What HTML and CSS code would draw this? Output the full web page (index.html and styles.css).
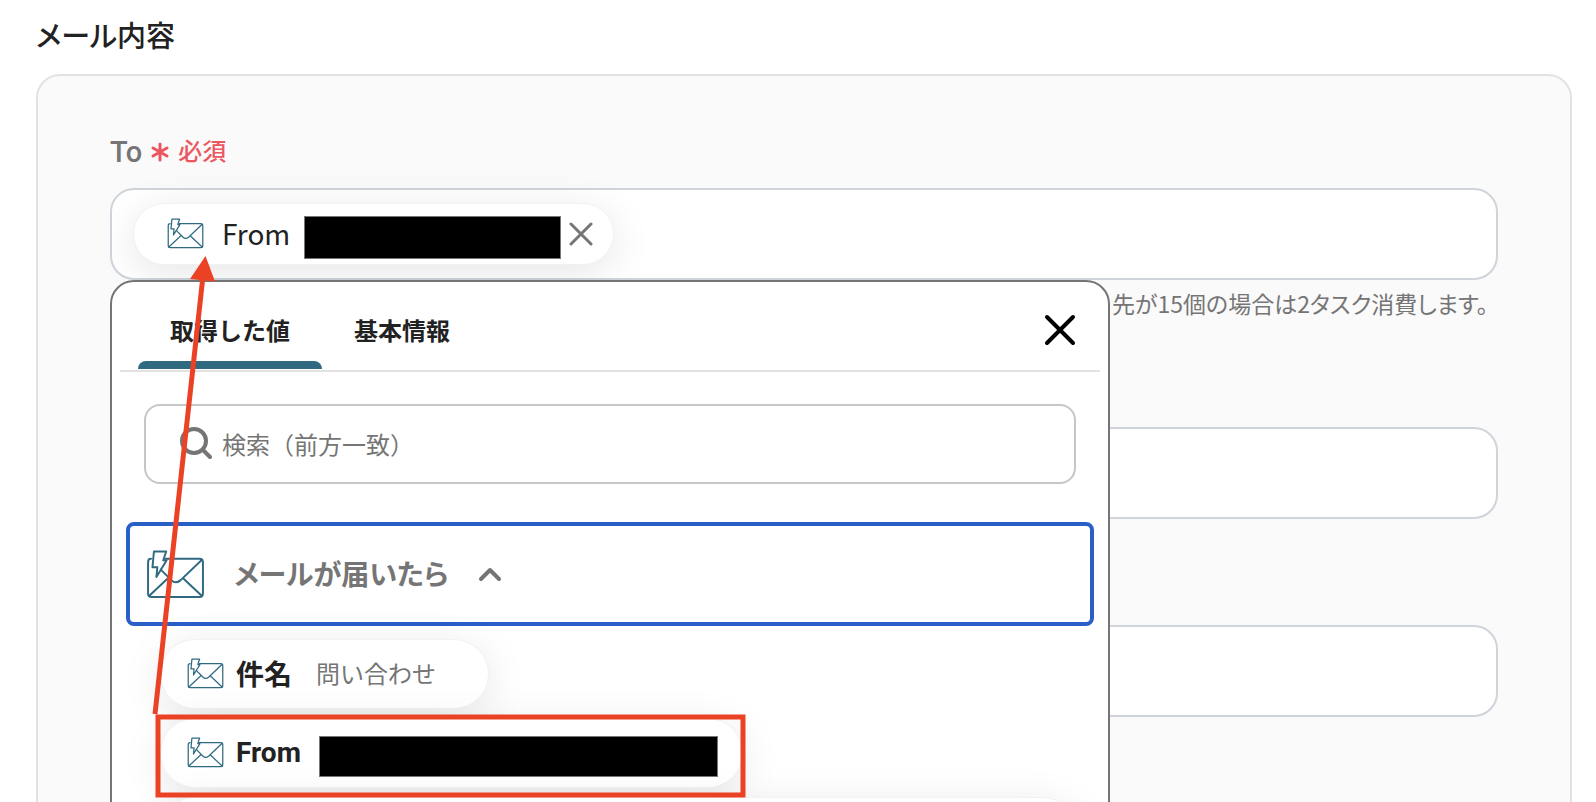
FILE: index.html
```
<!DOCTYPE html>
<html lang="ja">
<head>
<meta charset="utf-8">
<title>メール内容</title>
<link rel="stylesheet" href="styles.css">
</head>
<body>
<svg class="defs" aria-hidden="true">
  <symbol id="mail" viewBox="0 0 60 50">
    <g fill="none" stroke="currentColor" stroke-width="2" stroke-linejoin="round" stroke-linecap="round">
      <path d="M20 9H54.500Q58 9 58 12.500V44.500Q58 48 54.500 48H5.500Q2 48 2 44.500V12.500Q2 9 5 9"/>
      <path d="M15 20L26 31Q30 35 35 31L57 10M3 47L22 29M57 47L38 29"/>
      <path d="M8 1.500H20.500L17.500 10.500H21L10.500 27.500L11.500 17.500H6.500Z"/>
    </g>
  </symbol>
</svg>
<main class="page">
  <h1 class="title">メール内容</h1>
  <section class="panel">
    <div class="group">
      <div class="label">
        <span class="label-name">To</span>
        <svg class="star" viewBox="0 0 18 20"><path d="M9 2V18M2 6L16 14M16 6L2 14"/></svg>
        <span class="required">必須</span>
      </div>
      <div class="field">
        <div class="token">
          <svg class="mail-sm"><use href="#mail"/></svg>
          <span class="token-name">From</span>
          <span class="mask mask-token"></span>
          <button class="icon-button" aria-label="削除"><svg class="remove" viewBox="0 0 24 24"><path d="M2 2L22 22M22 2L2 22"/></svg></button>
        </div>
      </div>
      <p class="help">先が15個の場合は2タスク消費します。</p>

      <div class="picker">
        <div class="tabs">
          <button class="tab tab-active">取得した値</button>
          <button class="tab">基本情報</button>
          <button class="icon-button close-button" aria-label="閉じる"><svg class="close" viewBox="0 0 32 32"><path d="M3 3L29 29M29 3L3 29"/></svg></button>
        </div>
        <div class="picker-body">
          <label class="search">
            <svg class="search-icon" viewBox="0 0 32 34"><circle cx="14" cy="14" r="12"/><path d="M23 23L30 30"/></svg>
            <input class="search-input" type="text" placeholder="検索（前方一致）" aria-label="検索">
          </label>
          <button class="source">
            <svg class="mail-lg"><use href="#mail"/></svg>
            <span>メールが届いたら</span>
            <svg class="chevron" viewBox="0 0 24 16"><path d="M3 13L12 4L21 13"/></svg>
          </button>
          <div class="values">
            <button class="value"><svg class="mail-sm"><use href="#mail"/></svg><span class="value-name">件名</span><span class="value-text">問い合わせ</span></button>
            <button class="value value-from"><svg class="mail-sm"><use href="#mail"/></svg><span class="value-name">From</span><span class="mask mask-value"></span></button>
            <button class="value value-wide" aria-label="値"></button>
          </div>
        </div>
      </div>
    </div>
    <input class="field field-next" type="text" aria-label="Cc">
    <input class="field field-next" type="text" aria-label="Bcc">
  </section>
</main>
<svg class="annotation" width="760" height="802" viewBox="0 0 760 802" aria-hidden="true">
  <rect x="158" y="717" width="585" height="78" fill="none" stroke="#eb4125" stroke-width="5"/>
  <path d="M155 714L203 276" fill="none" stroke="#eb4125" stroke-width="5"/>
  <path d="M205.500 256L215 281.500L190 279Z" fill="#eb4125"/>
</svg>
</body>
</html>
```
FILE: styles.css
```
* { box-sizing: border-box; }

body {
  margin: 0;
  height: 100vh;
  overflow: hidden;
  background: #fff;
  color: #222;
  font-family: "Noto Sans CJK JP", sans-serif;
  font-size: 24px;
}

button, input { font: inherit; color: inherit; }
button { border: 0; background: none; padding: 0; }
svg { flex: none; }

.defs { position: absolute; width: 0; height: 0; }

.page { padding: 13px 24px 0 36px; }

.title {
  margin: 0 0 19px;
  font-size: 29px;
  line-height: 42px;
  font-weight: 500;
  font-feature-settings: "palt";
}

.panel {
  min-height: 100vh;
  padding: 56px 72px;
  border: 2px solid #e2e2e2;
  border-radius: 24px;
  background: #fafafa;
}

.group { position: relative; }

.label {
  display: flex;
  align-items: center;
  gap: 8px;
  height: 40px;
  margin-bottom: 16px;
  font-weight: 500;
}
.label-name { color: #757575; font-family: Roboto, sans-serif; font-size: 29px; line-height: 40px; }
.required { margin-bottom: 5px; color: #eb5760; font-size: 24px; line-height: 35px; }
.star {
  width: 20px;
  height: 20px;
  fill: none;
  stroke: #eb5760;
  stroke-width: 3;
  stroke-linecap: round;
}

.field {
  display: flex;
  align-items: center;
  width: 100%;
  height: 92px;
  padding: 0 21px;
  border: 2px solid #ced4da;
  border-radius: 24px;
  background: #fff;
}
.field-next { margin-top: 106px; }

.token {
  display: flex;
  align-items: center;
  height: 62px;
  padding: 0 20px 0 33px;
  border: 1px solid #f2f2f2;
  border-radius: 31px;
  background: #fff;
  box-shadow: 0 8px 40px rgba(0, 0, 0, 0.1);
}
.token-name { margin: 0 14px 0 18px; font-size: 28px; line-height: 40px; padding-bottom: 3px; }

.mail-sm { width: 37px; height: 31px; margin-bottom: 1px; color: #2f6a81; }
.mail-lg { width: 59px; height: 49px; color: #2f6a81; }

.mask { border: 1px solid #777; background: #000; }
.mask-token { width: 257px; height: 43px; margin: 6px 8px 0 0; }
.mask-value { width: 399px; height: 41px; margin: 6px 0 0 18px; }

.icon-button { display: flex; }
.remove, .close, .search-icon, .chevron {
  fill: none;
  stroke-linecap: round;
  stroke-linejoin: round;
}
.remove { width: 24px; height: 24px; stroke: #757575; stroke-width: 3; }
.close { width: 32px; height: 32px; stroke: #000; stroke-width: 4; }

.help {
  margin: 6px 0 0;
  padding-right: 10px;
  color: #757575;
  font-size: 23px;
  line-height: 35px;
  text-align: right;
  font-feature-settings: "palt";
}

.picker {
  position: absolute;
  top: 148px;
  left: 0;
  width: 1000px;
  max-width: 100%;
  padding: 0 8px 40px;
  border: 2px solid #757575;
  border-radius: 24px;
  background: #fff;
}

.tabs {
  display: flex;
  align-items: stretch;
  height: 90px;
  padding: 0 24px 0 18px;
  border-bottom: 2px solid #e2e2e2;
}
.tab {
  position: relative;
  padding: 6px 32px 0;
  font-weight: 700;
}
.tab-active::after {
  content: "";
  position: absolute;
  left: 0;
  right: 0;
  bottom: 1px;
  height: 8px;
  border-radius: 8px 8px 0 0;
  background: #2f6a81;
}
.close-button { align-items: center; margin-left: auto; padding-top: 8px; }

.picker-body { padding: 32px 6px 0; }

.search {
  display: flex;
  align-items: center;
  gap: 10px;
  height: 80px;
  margin: 0 18px 38px;
  padding: 0 34px;
  border: 2px solid #c6c6c6;
  border-radius: 16px;
}
.search-icon { width: 32px; height: 34px; stroke: #757575; stroke-width: 4; }
.search-input {
  flex: 1;
  min-width: 0;
  padding: 0 0 2px;
  border: 0;
  outline: 0;
  background: none;
}
.search-input::placeholder { color: #757575; opacity: 1; }

.source {
  display: flex;
  align-items: center;
  width: 100%;
  height: 104px;
  padding: 0 16px;
  border: 4px solid #2860c8;
  border-radius: 8px;
  color: #757575;
  font-size: 28px;
  font-weight: 700;
  font-feature-settings: "palt";
}
.source span { margin: 0 30px 0 29px; padding-bottom: 2px; }
.chevron { width: 24px; height: 16px; stroke: #757575; stroke-width: 4; }

.values {
  display: flex;
  flex-direction: column;
  align-items: flex-start;
  gap: 9px;
  padding: 13px 16px 0 34px;
}
.value {
  display: flex;
  align-items: center;
  height: 70px;
  padding: 0 52px 0 26px;
  border: 1px solid #f2f2f2;
  border-radius: 35px;
  background: #fff;
  box-shadow: 0 8px 40px rgba(0, 0, 0, 0.1);
}
.value-name {
  margin-left: 12px;
  padding-bottom: 2px;
  font-family: Roboto, "Noto Sans CJK JP", sans-serif;
  font-size: 28px;
  font-weight: 700;
}
.value-text { margin-left: 24px; padding-bottom: 4px; color: #757575; }
.value-from { padding-right: 24px; }
.value-wide { width: 100%; }

.annotation {
  position: absolute;
  top: 0;
  left: 0;
  pointer-events: none;
}
```
